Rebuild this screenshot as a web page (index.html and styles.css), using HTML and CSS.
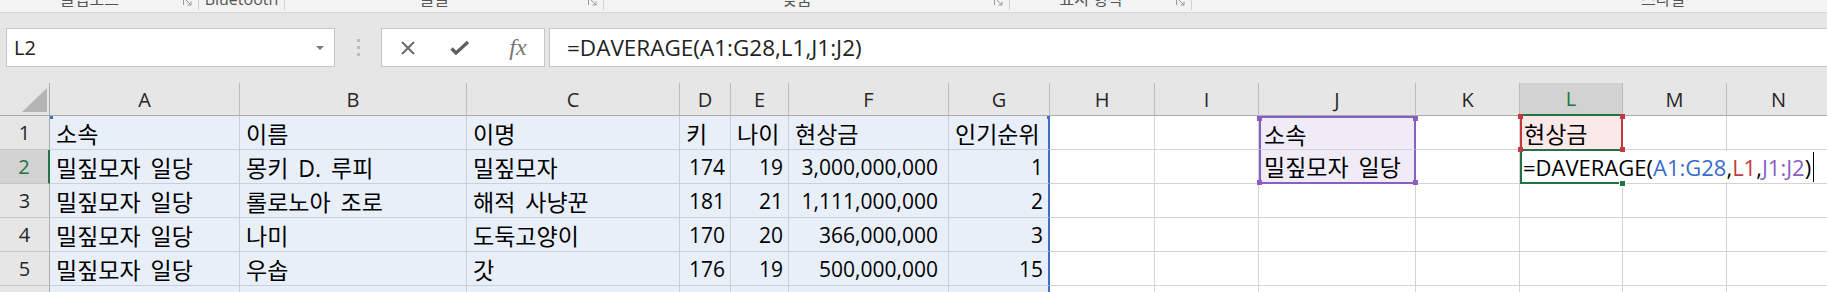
FILE: index.html
```html
<!DOCTYPE html>
<html lang="ko">
<head>
  <meta charset="UTF-8" />
  <title>DAVERAGE</title>
  <link rel="stylesheet" href="styles.css">
</head>
<body>

  <div class="ribbon">
    <div class="group g-clip"><span class="label">클립보드</span><svg class="launcher" width="9" height="9" viewBox="0 0 9 9"><path d="M0.5 8V0.5H8M3 3l5 5M8 4.5V8H4.5" fill="none" stroke="#9a9a9a"/></svg></div>
    <div class="group g-bt"><span class="label">Bluetooth</span></div>
    <div class="group g-font"><span class="label">글꼴</span><svg class="launcher" width="9" height="9" viewBox="0 0 9 9"><path d="M0.5 8V0.5H8M3 3l5 5M8 4.5V8H4.5" fill="none" stroke="#9a9a9a"/></svg></div>
    <div class="group g-align"><span class="label">맞춤</span><svg class="launcher" width="9" height="9" viewBox="0 0 9 9"><path d="M0.5 8V0.5H8M3 3l5 5M8 4.5V8H4.5" fill="none" stroke="#9a9a9a"/></svg></div>
    <div class="group g-num"><span class="label">표시 형식</span><svg class="launcher" width="9" height="9" viewBox="0 0 9 9"><path d="M0.5 8V0.5H8M3 3l5 5M8 4.5V8H4.5" fill="none" stroke="#9a9a9a"/></svg></div>
    <div class="group g-style"><span class="label">스타일</span></div>
  </div>

  <div class="formula-bar">
    <div class="name-box"><span class="value">L2</span><span class="drop"></span></div>
    <div class="grip"><i></i><i></i><i></i></div>
    <div class="fx-buttons">
      <span class="btn"><svg width="16" height="16" viewBox="0 0 16 16"><path d="M2 2l12 12M14 2L2 14" stroke="#6b6b6b" stroke-width="2"/></svg></span>
      <span class="btn"><svg width="20" height="16" viewBox="0 0 20 16"><path d="M1.5 8.5l4.5 4.5 12-11" fill="none" stroke="#5e5e5e" stroke-width="3.2"/></svg></span>
      <span class="btn fx">fx</span>
    </div>
    <div class="formula-input">=DAVERAGE(A1:G28,L1,J1:J2)</div>
  </div>

  <div class="sheet">
    <div class="corner"><svg width="49" height="32" viewBox="0 0 49 32"><polygon points="47,5 47,29 22,29" fill="#b4b4b4"/></svg></div>
    <div class="col-head">A</div>
    <div class="col-head">B</div>
    <div class="col-head">C</div>
    <div class="col-head">D</div>
    <div class="col-head">E</div>
    <div class="col-head">F</div>
    <div class="col-head">G</div>
    <div class="col-head">H</div>
    <div class="col-head">I</div>
    <div class="col-head">J</div>
    <div class="col-head">K</div>
    <div class="col-head active">L</div>
    <div class="col-head">M</div>
    <div class="col-head">N</div>

    <!-- 1행 -->
    <div class="row-head">1</div>
    <div class="cell rng"><span class="handle blue tl"></span>소속</div>
    <div class="cell rng">이름</div>
    <div class="cell rng">이명</div>
    <div class="cell rng">키</div>
    <div class="cell rng">나이</div>
    <div class="cell rng">현상금</div>
    <div class="cell rng rng-end">인기순위<span class="handle blue tr"></span></div>
    <div class="cell"></div>
    <div class="cell"></div>
    <div class="cell crit crit-top"><span class="handle purple tl"></span>소속<span class="handle purple tr"></span></div>
    <div class="cell"></div>
    <div class="cell field"><span class="handle red tl"></span>현상금<span class="handle red tr"></span><span class="handle red bl"></span><span class="handle red br"></span></div>
    <div class="cell"></div>
    <div class="cell"></div>

    <!-- 2행 -->
    <div class="row-head active">2</div>
    <div class="cell rng">밀짚모자 일당</div>
    <div class="cell rng">몽키 D. 루피</div>
    <div class="cell rng">밀짚모자</div>
    <div class="cell rng num">174</div>
    <div class="cell rng num">19</div>
    <div class="cell rng num acct">3,000,000,000</div>
    <div class="cell rng rng-end num">1</div>
    <div class="cell"></div>
    <div class="cell"></div>
    <div class="cell crit crit-bottom"><span class="handle purple bl"></span>밀짚모자 일당<span class="handle purple br"></span></div>
    <div class="cell"></div>
    <div class="cell active">
      <div class="editor">=DAVERAGE(<span class="ref-blue">A1:G28</span>,<span class="ref-red">L1</span>,<span class="ref-purple">J1:J2</span>)<span class="caret"></span></div>
      <span class="fill-handle"></span>
    </div>
    <div class="cell"></div>
    <div class="cell"></div>

    <!-- 3행 -->
    <div class="row-head">3</div>
    <div class="cell rng">밀짚모자 일당</div>
    <div class="cell rng">롤로노아 조로</div>
    <div class="cell rng">해적 사냥꾼</div>
    <div class="cell rng num">181</div>
    <div class="cell rng num">21</div>
    <div class="cell rng num acct">1,111,000,000</div>
    <div class="cell rng rng-end num">2</div>
    <div class="cell"></div><div class="cell"></div><div class="cell"></div><div class="cell"></div>
    <div class="cell"></div><div class="cell"></div><div class="cell"></div>

    <!-- 4행 -->
    <div class="row-head">4</div>
    <div class="cell rng">밀짚모자 일당</div>
    <div class="cell rng">나미</div>
    <div class="cell rng">도둑고양이</div>
    <div class="cell rng num">170</div>
    <div class="cell rng num">20</div>
    <div class="cell rng num acct">366,000,000</div>
    <div class="cell rng rng-end num">3</div>
    <div class="cell"></div><div class="cell"></div><div class="cell"></div><div class="cell"></div>
    <div class="cell"></div><div class="cell"></div><div class="cell"></div>

    <!-- 5행 -->
    <div class="row-head">5</div>
    <div class="cell rng">밀짚모자 일당</div>
    <div class="cell rng">우솝</div>
    <div class="cell rng">갓</div>
    <div class="cell rng num">176</div>
    <div class="cell rng num">19</div>
    <div class="cell rng num acct">500,000,000</div>
    <div class="cell rng rng-end num">15</div>
    <div class="cell"></div><div class="cell"></div><div class="cell"></div><div class="cell"></div>
    <div class="cell"></div><div class="cell"></div><div class="cell"></div>

    <!-- 6행 (잘려서 보임) -->
    <div class="row-head"></div>
    <div class="cell rng"></div><div class="cell rng"></div><div class="cell rng"></div><div class="cell rng"></div>
    <div class="cell rng"></div><div class="cell rng"></div><div class="cell rng rng-end"></div>
    <div class="cell"></div><div class="cell"></div><div class="cell"></div><div class="cell"></div>
    <div class="cell"></div><div class="cell"></div><div class="cell"></div>
  </div>

</body>
</html>
```

FILE: styles.css
```css
html, body {
  margin: 0;
  width: 1827px;
  height: 292px;
  overflow: hidden;
}

body {
  background-color: #e6e6e6;
  font-family: "Open Sans", "Noto Sans CJK KR", sans-serif;
  color: #000;
}

/* 리본 (위쪽이 잘린 부분) */
.ribbon {
  display: flex;
  height: 12px;
  background-color: #f3f3f3;
  border-bottom: 1px solid #d5d5d5;
  overflow: hidden;
}

.group {
  display: flex;
  flex: none;
  height: 10px;
  border-right: 1px solid #d2d2d2;
  box-sizing: border-box;
}

.group .label {
  flex: 1;
  text-align: center;
  font-size: 16px;
  line-height: 16px;
  margin-top: -9px;
  color: #555;
  white-space: nowrap;
}

.launcher {
  flex: none;
  margin: -3px 6px 0 4px;
}

.g-clip { width: 199px; }
.g-bt { width: 86px; }
.g-font { width: 319px; }
.g-align { width: 406px; }
.g-num { width: 182px; }
.g-style { width: 942px; border-right: none; }

/* 수식 입력줄 */
.formula-bar {
  display: flex;
  height: 39px;
  margin: 15px 0 16px 6px;
}

.name-box {
  width: 329px;
  box-sizing: border-box;
  background-color: #fff;
  border: 1px solid #c6c6c6;
  display: flex;
  align-items: center;
  padding: 0 10px 0 7px;
  font-size: 20px;
  color: #222;
}

.name-box .value {
  flex: 1;
}

.name-box .drop {
  border-left: 4px solid transparent;
  border-right: 4px solid transparent;
  border-top: 4px solid #7a7a7a;
}

.grip {
  width: 46px;
  display: flex;
  flex-direction: column;
  align-items: center;
  justify-content: center;
  gap: 4px;
}

.grip i {
  width: 3px;
  height: 3px;
  background-color: #bdbdbd;
}

.fx-buttons {
  width: 164px;
  box-sizing: border-box;
  background-color: #fff;
  border: 1px solid #c6c6c6;
  display: flex;
}

.fx-buttons .btn {
  width: 54px;
  display: flex;
  align-items: center;
  justify-content: center;
}

.fx-buttons .fx {
  padding-left: 6px;
  font-family: "Liberation Serif", serif;
  font-style: italic;
  font-size: 24px;
  color: #777;
}

.formula-input {
  flex: 1;
  margin-left: 4px;
  background-color: #fff;
  border: 1px solid #c6c6c6;
  border-right: none;
  padding-left: 17px;
  display: flex;
  align-items: center;
  font-size: 22.5px;
  color: #222;
  white-space: nowrap;
}

/* 시트 */
.sheet {
  display: grid;
  grid-template-columns: 50px 190px 227px 213px 51px 58px 160px 101px 105px 104px 157px 104px 103px 104px 104px;
  grid-template-rows: 33px repeat(6, 34px);
  background-color: #fff;
}

.sheet > div {
  box-sizing: border-box;
}

.corner {
  background-color: #e6e6e6;
  border-right: 1px solid #ababab;
  border-bottom: 1px solid #ababab;
}

.corner svg {
  display: block;
}

.col-head {
  background-color: #e6e6e6;
  border-right: 1px solid #bcbcbc;
  border-bottom: 1px solid #ababab;
  display: flex;
  align-items: center;
  justify-content: center;
  font-size: 20px;
  color: #262626;
}

.col-head.active {
  background-color: #d2d2d2;
  color: #217346;
  border-bottom: 2px solid #217346;
}

.row-head {
  background-color: #e6e6e6;
  border-right: 1px solid #ababab;
  border-bottom: 1px solid #c6c6c6;
  display: flex;
  align-items: center;
  justify-content: center;
  font-size: 20px;
  color: #262626;
}

.row-head.active {
  background-color: #d2d2d2;
  color: #217346;
  border-right: 2px solid #217346;
}

.cell {
  position: relative;
  border-right: 1px solid #d4d4d4;
  border-bottom: 1px solid #d4d4d4;
  padding: 0 6px;
  display: flex;
  align-items: center;
  font-size: 23px;
  word-spacing: 4px;
  white-space: nowrap;
}

.cell.num {
  justify-content: flex-end;
  padding-right: 5px;
  font-size: 21px;
}

.cell.acct {
  padding-right: 10px;
}

/* 참조 범위 표시 */
.cell.rng {
  background-color: #e9eff8;
  border-color: #c6d0de;
}

.cell.rng-end {
  border-right: 2px solid #3e6fc8;
}

.cell.crit {
  background-color: #f0ecf7;
  border-left: 2px solid #8a5fc2;
  border-right: 2px solid #8a5fc2;
  padding-left: 3px;
}

.cell.crit-top {
  border-top: 2px solid #8a5fc2;
}

.cell.crit-bottom {
  border-bottom: 2px solid #8a5fc2;
}

.cell.field {
  background-color: #fbe8e8;
  border-left: 2px solid #c4393f;
  border-right: 2px solid #c4393f;
  border-bottom-color: #217346;
  padding-left: 2px;
}

.cell.active {
  border-left: 2px solid #217346;
  border-top: 1px solid #217346;
  border-bottom: 2px solid #217346;
  padding: 0;
}

.editor {
  position: absolute;
  left: 0;
  top: 0;
  bottom: 0;
  z-index: 2;
  padding-left: 1px;
  background-color: #fff;
  display: flex;
  align-items: center;
  font-size: 22px;
  word-spacing: 0;
  white-space: nowrap;
}

.ref-blue { color: #3a6cc9; }
.ref-red { color: #c4393f; }
.ref-purple { color: #8a5fc2; }

.caret {
  width: 1px;
  height: 30px;
  margin-left: 2px;
  background-color: #000;
}

.fill-handle {
  position: absolute;
  right: -4px;
  bottom: -5px;
  z-index: 3;
  width: 5px;
  height: 5px;
  background-color: #217346;
  border: 1px solid #fff;
}

.handle {
  position: absolute;
  z-index: 3;
  width: 5px;
  height: 5px;
}

.handle.blue {
  width: 3px;
  height: 3px;
  background-color: #3e6fc8;
}

.handle.purple { background-color: #8a5fc2; }
.handle.red { background-color: #c4393f; }

.handle.tl { left: -4px; top: -2px; }
.handle.tr { right: -4px; top: -2px; }
.handle.bl { left: -4px; bottom: -3px; }
.handle.br { right: -4px; bottom: -3px; }

.handle.blue.tl { left: 0; top: 0; }
.handle.blue.tr { right: -2px; top: 0; }
```
